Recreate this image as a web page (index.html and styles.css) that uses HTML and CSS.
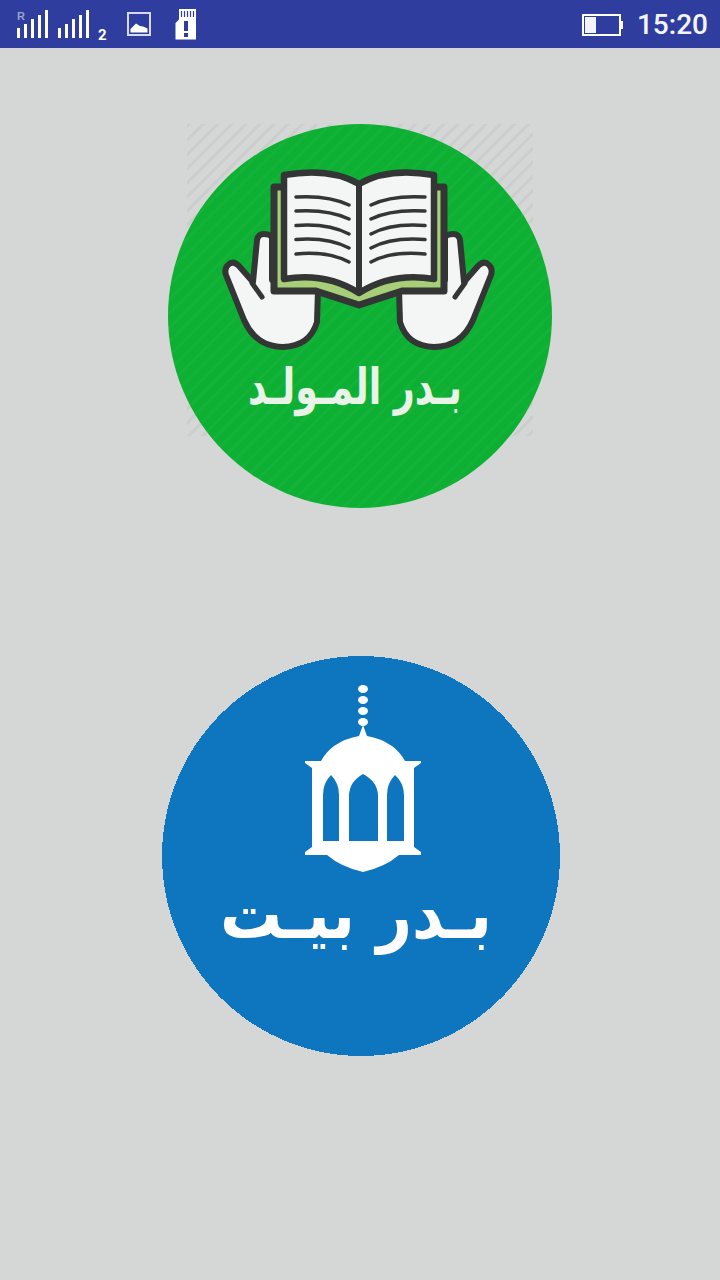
FILE: index.html
```html
<!DOCTYPE html>
<html lang="ar">
<head>
<meta charset="utf-8">
<title>بدر</title>
<link rel="stylesheet" href="styles.css">
</head>
<body>
<header class="status-bar">
  <div class="status-left">
    <div class="sim">
      <span class="roaming">R</span>
      <svg class="signal" width="32" height="28" viewBox="0 0 32 28"><rect x="0" y="18" width="3" height="10"/><rect x="7" y="14" width="3" height="14"/><rect x="14" y="9" width="3" height="19"/><rect x="21" y="5" width="3" height="23"/><rect x="28" y="0" width="3" height="28"/></svg>
    </div>
    <div class="sim sim-two">
      <svg class="signal" width="32" height="28" viewBox="0 0 32 28"><rect x="0" y="18" width="3" height="10"/><rect x="7" y="14" width="3" height="14"/><rect x="14" y="9" width="3" height="19"/><rect x="21" y="5" width="3" height="23"/><rect x="28" y="0" width="3" height="28"/></svg>
      <span class="sim-number">2</span>
    </div>
    <svg class="picture-icon" width="24" height="24" viewBox="0 0 24 24"><rect x="1" y="1" width="22" height="22" class="pic-frame"/><path d="M3.500 20.500V17L9 11.500L13 14L16 14.500L20.500 16.500V20.500Z" class="pic-fill"/></svg>
    <svg class="sd-icon" width="22" height="31" viewBox="0 0 22 31"><path d="M4 0H21V30.500H0.500V14L4 10.500Z" class="sd-body"/><path d="M6.500 2V8M9.500 2V8M12.500 2V8M15.500 2V8M18.500 2V8" class="sd-pins"/><rect x="9" y="12" width="4" height="10" class="sd-mark"/><rect x="9" y="24" width="4" height="4" class="sd-mark"/></svg>
  </div>
  <div class="status-right">
    <svg class="battery" width="41" height="24" viewBox="0 0 41 24"><rect x="1" y="2" width="37" height="20" class="bat-case"/><rect x="3" y="4" width="11" height="16" class="bat-level"/><rect x="38" y="8" width="3" height="8" class="bat-tip"/></svg>
    <span class="clock">15:20</span>
  </div>
</header>

<main class="screen">
  <a class="logo logo-green">
    <svg width="384" height="384" viewBox="168 124 384 384">
      <defs>
        <pattern id="hatch" width="10" height="10" patternUnits="userSpaceOnUse" patternTransform="rotate(45)">
          <rect width="10" height="10" class="hatch-bg"/><rect width="3" height="10" class="hatch-line"/>
        </pattern>
        <pattern id="sheen" width="10" height="10" patternUnits="userSpaceOnUse" patternTransform="rotate(45)">
          <rect width="3" height="10" class="sheen-line"/>
        </pattern>
        <g id="hand">
          <path d="M272 238Q271 234 264 234Q258 234 257 240L253 282L239 266Q233 260 228 265Q224 269 226 275L244 320Q256 347 283 347Q310 346 317 322L318 290L272 280Z" class="hand"/>
          <path d="M252 283L262 297" class="ink-line"/>
        </g>
      </defs>
      <rect x="187" y="124" width="346" height="312" fill="url(#hatch)"/>
      <circle cx="360" cy="316" r="192" class="green-disc"/>
      <circle cx="360" cy="316" r="192" fill="url(#sheen)"/>
      <use href="#hand"/>
      <use href="#hand" transform="translate(717 0) scale(-1 1)"/>
      <path d="M274 187H444V291H402L359 305L316 291H274Z" class="cover"/>
      <path d="M284 175Q330 167 359 184Q388 167 434 175V279Q392 272 359 293Q326 272 284 279Z" class="pages"/>
      <path d="M359 184V293" class="ink-spine"/>
      <g class="ink-lines">
        <path d="M296 197Q328 195 349 205M296 211Q328 209 349 219M296 225.500Q328 223 349 234M296 239.500Q328 237 349 248M296 254Q328 251 349 262"/>
        <path d="M425 197Q391 195 371 205M425 211Q391 209 371 219M425 225.500Q391 223 371 234M425 239.500Q391 237 371 248M425 254Q391 251 371 262"/>
      </g>
      <text x="355" y="404" class="logo-text logo-text-green" textLength="214" lengthAdjust="spacingAndGlyphs">بـدر المـولـد</text>
    </svg>
  </a>

  <a class="logo logo-blue">
    <svg width="398" height="400" viewBox="162 656 398 400">
      <ellipse cx="361" cy="856" rx="199" ry="200" class="blue-disc"/>
      <g class="lantern">
        <ellipse cx="363" cy="689" rx="5" ry="4"/>
        <ellipse cx="363" cy="700" rx="5" ry="4"/>
        <ellipse cx="363" cy="711" rx="5" ry="4"/>
        <ellipse cx="363" cy="722" rx="5" ry="4"/>
        <path fill-rule="evenodd" d="M363 725L367 736Q380 738 392 746Q400 752 405 761H421V763L414 768V847L421 852V855H399Q385 867 363 872Q341 867 327 855H305V852L312 847V768L305 763V761H321Q326 752 334 746Q346 738 359 736ZM331 775Q323 783 323 795V841H339V795Q339 783 331 775ZM363 774Q349 782 349 796V841H378V796Q378 782 363 774ZM395 775Q387 783 387 795V841H404V795Q404 783 395 775Z"/>
      </g>
      <text x="356" y="938" class="logo-text logo-text-blue" textLength="272" lengthAdjust="spacingAndGlyphs">بـدر بيـت</text>
    </svg>
  </a>
</main>
</body>
</html>
```
FILE: styles.css
```css
* { box-sizing: border-box; }
html, body { margin: 0; padding: 0; }
body {
  width: 720px;
  height: 1280px;
  background: #d5d7d6;
  overflow: hidden;
  font-family: Roboto, "Liberation Sans", sans-serif;
}
svg { display: block; }

.status-bar {
  height: 48px;
  background: #2f3e9e;
  display: flex;
  align-items: center;
  justify-content: space-between;
  padding: 0 12px 0 17px;
  color: #fff;
}
.status-left { display: flex; align-items: center; }
.status-right { display: flex; align-items: center; gap: 14px; }

.sim { position: relative; display: flex; align-items: flex-end; height: 28px; }
.sim-two { margin-left: 9px; width: 59px; }
.signal rect { fill: #fff; }
.roaming {
  position: absolute;
  left: 0;
  top: 1px;
  font: bold 11px/10px "Liberation Sans", sans-serif;
  color: #9aa2cc;
}
.sim-number {
  position: absolute;
  left: 40px;
  top: 17px;
  font: bold 15px/16px Roboto, sans-serif;
  color: #fff;
}
.picture-icon { margin-left: 10px; }
.pic-frame { fill: none; stroke: #d6d9ec; stroke-width: 2; }
.pic-fill { fill: #fff; }
.sd-icon { margin-left: 24px; }
.sd-body { fill: #fff; }
.sd-pins { stroke: #2f3e9e; stroke-width: 1.200; fill: none; }
.sd-mark { fill: #2f3e9e; }

.battery { margin-top: 1px; }
.bat-case { fill: none; stroke: #fff; stroke-width: 2; }
.bat-level { fill: #f3f4fa; }
.bat-tip { fill: #fff; }
.clock { font-size: 28px; line-height: 32px; font-weight: 500; color: #f4f5fb; margin-top: 2px; }

.screen { display: flex; flex-direction: column; align-items: center; padding-top: 76px; }
.logo { display: block; }
.logo-blue { margin-top: 148px; margin-left: 1px; }

.hatch-bg { fill: #d5d7d6; }
.hatch-line { fill: #cccecd; }
.sheen-line { fill: #ffffff; fill-opacity: 0.025; }
.green-disc { fill: #0db033; }
.hand { fill: #f4f6f5; stroke: #333635; stroke-width: 6; stroke-linejoin: round; }
.ink-line { fill: none; stroke: #333635; stroke-width: 5; stroke-linecap: round; }
.cover { fill: #a6cf78; stroke: #333635; stroke-width: 7; stroke-linejoin: round; }
.pages { fill: #f4f6f5; stroke: #333635; stroke-width: 6.500; stroke-linejoin: round; }
.ink-spine { stroke: #333635; stroke-width: 6; fill: none; }
.ink-lines path { fill: none; stroke: #333635; stroke-width: 3.500; stroke-linecap: round; }

.logo-text {
  font-family: "DejaVu Sans", sans-serif;
  font-weight: 700;
  text-anchor: middle;
  direction: rtl;
}
.logo-text-green { font-size: 50px; fill: #e9f3e8; }
.logo-text-blue { font-size: 68px; fill: #fff; }

.blue-disc { fill: #0e75bf; shape-rendering: crispEdges; }
.lantern { fill: #fff; }
```
